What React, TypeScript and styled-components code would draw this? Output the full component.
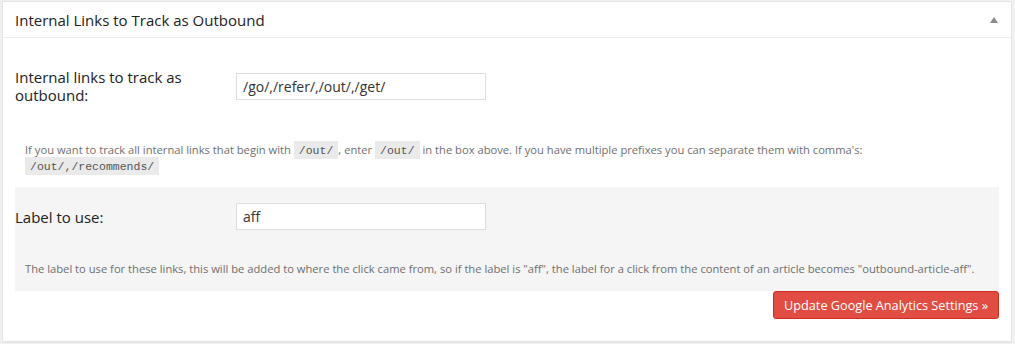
import React from "react";
import styled, { createGlobalStyle } from "styled-components";

const GlobalStyle = createGlobalStyle`
  body {
    margin: 0;
    background-color: #f1f1f1;
    font-family: "Open Sans", "Liberation Sans", sans-serif;
  }
`;

const App: React.FC = () => {
  return (
    <>
      <GlobalStyle />
      <Page>
        <Card>
          <Header>
            <Title>Internal Links to Track as Outbound</Title>
            <Toggle />
          </Header>
          <Body>
            <FormRow>
              <Label>Internal links to track as outbound:</Label>
              <Field>
                <TextInput defaultValue="/go/,/refer/,/out/,/get/" />
              </Field>
            </FormRow>
            <Help>
              If you want to track all internal links that begin with <Code>/out/</Code>, enter{" "}
              <Code>/out/</Code> in the box above. If you have multiple prefixes you can separate
              them with comma's: <Code>/out/,/recommends/</Code>
            </Help>
            <GreySection>
              <FormRow $single>
                <Label>Label to use:</Label>
                <Field>
                  <TextInput defaultValue="aff" />
                </Field>
              </FormRow>
              <Help $grey>
                The label to use for these links, this will be added to where the click came from,
                so if the label is "aff", the label for a click from the content of an article
                becomes "outbound-article-aff".
              </Help>
            </GreySection>
            <Actions>
              <SubmitButton>Update Google Analytics Settings »</SubmitButton>
            </Actions>
          </Body>
        </Card>
      </Page>
    </>
  );
};

const Page = styled.div`
  padding: 1px 3px 2px 2px;
`;

const Card = styled.div`
  border: 1px solid #e5e5e5;
  background-color: #fff;
  box-shadow: 0 1px 1px rgba(0, 0, 0, 0.04);
`;

const Header = styled.div`
  display: flex;
  align-items: center;
  justify-content: space-between;
  height: 35px;
  padding: 0 13px 0 12px;
  border-bottom: 1px solid #eee;
`;

const Title = styled.h3`
  margin: 0;
  font-size: 15px;
  font-weight: 400;
  color: #222;
`;

const Toggle = styled.span`
  width: 0;
  height: 0;
  border-left: 4px solid transparent;
  border-right: 4px solid transparent;
  border-bottom: 6px solid #8a8a8a;
`;

const Body = styled.div`
  padding: 0 12px 22px;
`;

const FormRow = styled.div<{ $single?: boolean }>`
  display: flex;
  align-items: center;
  padding: ${({ $single }) => ($single ? "16px 0 0" : "30px 0 0")};
`;

const Label = styled.div`
  width: 200px;
  margin-right: 21px;
  font-size: 15px;
  line-height: 18px;
  color: #222;
`;

const Field = styled.div`
  flex: 1;
`;

const TextInput = styled.input`
  box-sizing: border-box;
  width: 250px;
  height: 27px;
  padding: 0 6px;
  border: 1px solid #ddd;
  background-color: #fff;
  font-family: "Open Sans", "Liberation Sans", sans-serif;
  font-size: 14px;
  color: #333;
  outline: none;
`;

const Help = styled.p<{ $grey?: boolean }>`
  margin: 0;
  padding: ${({ $grey }) => ($grey ? "31px 10px 15px" : "38px 10px 13px")};
  font-size: 11.2px;
  line-height: 15px;
  color: #6f6f6f;
`;

const Code = styled.code`
  padding: 3px 5px 2px;
  background-color: #eaeaea;
  font-family: Consolas, "Liberation Mono", monospace;
  font-size: 11.5px;
  color: #555;
`;

const GreySection = styled.div`
  background-color: #f5f5f5;
`;

const Actions = styled.div`
  display: flex;
  justify-content: flex-end;
`;

const SubmitButton = styled.button`
  height: 28px;
  padding: 0 10px;
  border: 1px solid #d02c21;
  border-radius: 3px;
  background-color: #e14d43;
  font-family: "Open Sans", "Liberation Sans", sans-serif;
  font-size: 12.7px;
  color: #fff;
  cursor: pointer;
`;

export default App;
